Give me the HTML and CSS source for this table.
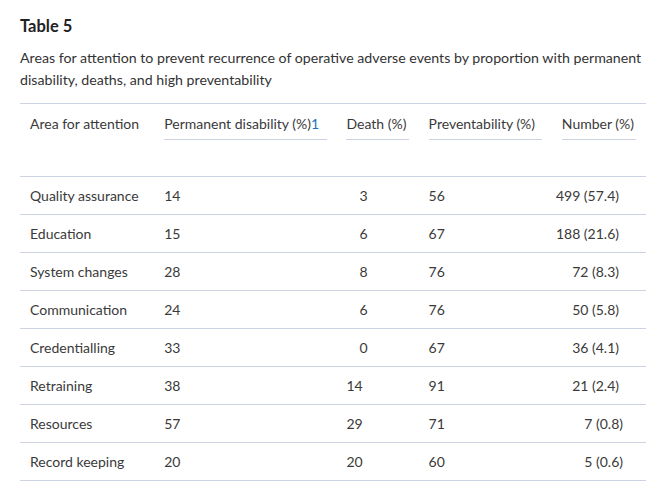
FILE: index.html
```html
<!DOCTYPE html>
<html lang="en">
<head>
<meta charset="utf-8">
<title>Table 5</title>
<link rel="stylesheet" href="styles.css">
</head>
<body>
<div class="wrap">
  <h2 class="title">Table 5</h2>
  <p class="caption">Areas for attention to prevent recurrence of operative adverse events by proportion with permanent disability, deaths, and high preventability</p>
  <table class="data">
    <thead>
      <tr>
        <th class="c1"><span class="plain">Area for attention</span></th>
        <th class="c2"><span class="lbl">Permanent disability (%)<a class="fn">1</a></span></th>
        <th class="c3"><span class="lbl">Death (%)</span></th>
        <th class="c4"><span class="lbl">Preventability (%)</span></th>
        <th class="c5"><span class="lbl">Number (%)</span></th>
      </tr>
    </thead>
    <tbody>
      <tr><td class="c1">Quality assurance</td><td class="c2">14</td><td class="c3"><span class="one">3</span></td><td class="c4">56</td><td class="c5"><span class="num">499 (57.4)</span></td></tr>
      <tr><td class="c1">Education</td><td class="c2">15</td><td class="c3"><span class="one">6</span></td><td class="c4">67</td><td class="c5"><span class="num">188 (21.6)</span></td></tr>
      <tr><td class="c1">System changes</td><td class="c2">28</td><td class="c3"><span class="one">8</span></td><td class="c4">76</td><td class="c5"><span class="num">72 (8.3)</span></td></tr>
      <tr><td class="c1">Communication</td><td class="c2">24</td><td class="c3"><span class="one">6</span></td><td class="c4">76</td><td class="c5"><span class="num">50 (5.8)</span></td></tr>
      <tr><td class="c1">Credentialling</td><td class="c2">33</td><td class="c3"><span class="one">0</span></td><td class="c4">67</td><td class="c5"><span class="num">36 (4.1)</span></td></tr>
      <tr><td class="c1">Retraining</td><td class="c2">38</td><td class="c3"><span class="two">14</span></td><td class="c4">91</td><td class="c5"><span class="num">21 (2.4)</span></td></tr>
      <tr><td class="c1">Resources</td><td class="c2">57</td><td class="c3"><span class="two">29</span></td><td class="c4">71</td><td class="c5"><span class="num short">7 (0.8)</span></td></tr>
      <tr><td class="c1">Record keeping</td><td class="c2">20</td><td class="c3"><span class="two">20</span></td><td class="c4">60</td><td class="c5"><span class="num short">5 (0.6)</span></td></tr>
    </tbody>
  </table>
</div>
</body>
</html>
```

FILE: styles.css
```css
html, body {
  margin: 0;
  padding: 0;
  background: #ffffff;
}
body {
  font-family: Lato, "Open Sans", "Liberation Sans", sans-serif;
  color: #333333;
}
.wrap {
  padding: 15px 13px 0 20px;
}
.title {
  margin: 0;
  font-size: 16.5px;
  line-height: 22px;
  font-weight: 700;
  color: #222222;
}
.caption {
  margin: 10px 0 0 0;
  font-size: 14.2px;
  line-height: 22px;
  color: #333333;
}
.data {
  margin-top: 12px;
  width: 626px;
  border-collapse: collapse;
  table-layout: fixed;
  font-size: 14px;
  color: #3a3a3a;
}
.data th {
  font-weight: 400;
  text-align: left;
  vertical-align: top;
  padding: 10px 10px 36px 10px;
  border-top: 1px solid #cdd2e3;
  border-bottom: 1px solid #cdd2e3;
}
.data th .lbl {
  display: block;
  line-height: 20px;
  padding-bottom: 5px;
  border-bottom: 1px solid #cdd2e3;
  white-space: nowrap;
}
.data th .plain {
  display: block;
  line-height: 20px;
}
.data th.c3 {
  padding-left: 9px;
}
.fn {
  color: #1a73c0;
  text-decoration: none;
}
.data td {
  height: 37px;
  padding: 0 10px;
  line-height: 20px;
  border-bottom: 1px solid #cdd2e3;
  vertical-align: middle;
  white-space: nowrap;
}
.c1 { width: 114px; }
.c2 { width: 163px; }
.c3 { width: 62px; }
.c4 { width: 113px; }
.c5 { width: 74px; }
.data td.c3 { padding-left: 9px; }
.one {
  display: inline-block;
  padding-left: 13px;
}
.two {
  display: inline-block;
}
.data td.c5 {
  text-align: right;
  padding-left: 0;
  padding-right: 0;
}
.num {
  display: inline-block;
  padding-right: 27px;
}
.num.short {
  padding-right: 23px;
}
```
